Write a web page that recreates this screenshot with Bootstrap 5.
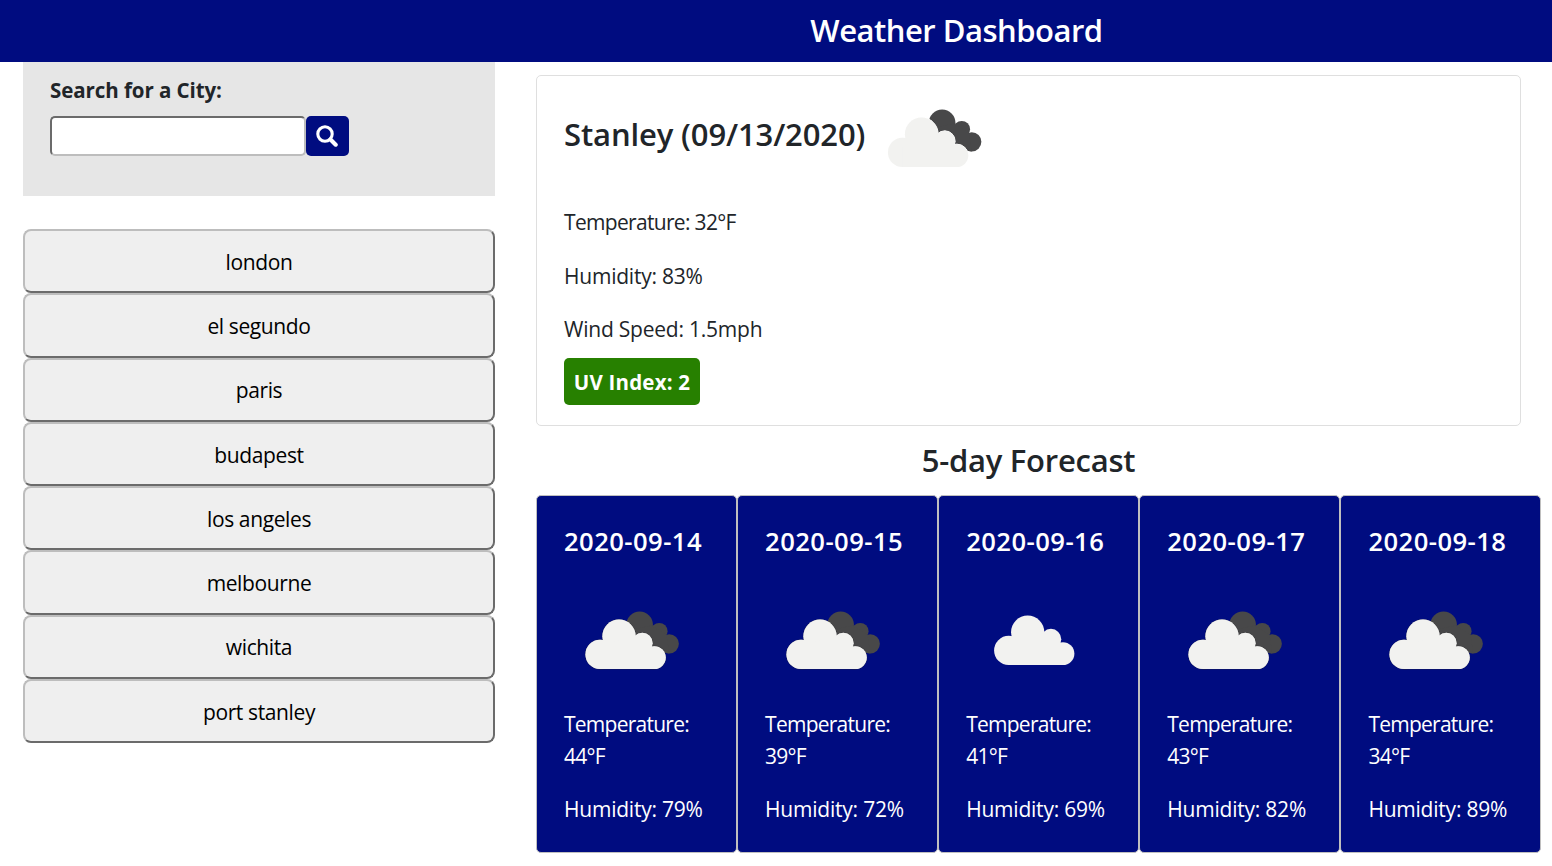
<!DOCTYPE html>
<html lang="en">
<head>
<meta charset="utf-8">
<meta name="viewport" content="width=device-width, initial-scale=1">
<title>Weather Dashboard</title>
<link rel="stylesheet" href="https://cdn.jsdelivr.net/npm/bootstrap@5.3.0/dist/css/bootstrap.min.css">
<style>
  body { font-family: "Open Sans", "Noto Sans", sans-serif; font-size: 21px; line-height: 32px; color: #212529; overflow: hidden; letter-spacing: -.55px; }
  .top-bar { background: #000c80; height: 62px; padding-left: 361px; }
  .top-bar h1 { font-size: 31px; font-weight: 600; letter-spacing: -.5px; }
  .page-body { padding-left: 23px; }
  .side { width: 472px; margin-right: 41px; }
  .search-box { background: #e6e6e6; height: 134px; padding: 12px 27px; margin-bottom: 33px; }
  .search-box label { font-size: 20.5px; font-weight: 700; letter-spacing: -.07px; margin-bottom: 10px; }
  .search-input { width: 256px; height: 40px; border: 2px solid; border-color: #6b6b6b #bdbdbd #bdbdbd #6b6b6b; border-radius: 5px; background: #fff; }
  .search-btn { width: 43px; height: 40px; border: 0; border-radius: 5px; background: #000c80; padding: 0 2px 0 0; }
  .city { height: 64.3px; border: 2px solid; border-color: #bdbdbd #6b6b6b #6b6b6b #bdbdbd; border-radius: 8px; background: #efefef; color: #000; padding: 1px 0 0; letter-spacing: -.38px; }
  .main-col { width: 1005.5px; padding-top: 13px; }
  .today { width: 985px; height: 351px; border-color: #dfdfdf; border-radius: 5px; }
  .today .card-body, .day .card-body { padding: 26.5px 27px; }
  .today-head { height: 66px; margin-bottom: 37px; }
  .today-head h2 { font-size: 31px; font-weight: 600; letter-spacing: -.13px; margin: -2px 2px 0 0; }
  .wx { width: 133px; height: 133px; display: block; flex: none; }
  .today-head .wx { margin: -30px 0 -36px; }
  .line { margin-bottom: 21.4px; white-space: nowrap; }
  .temp { letter-spacing: -.68px; }
  .hum, .wind { letter-spacing: -.22px; }
  .today .temp { margin-bottom: 22.4px; }
  .uv { background: #278000; color: #fff; font-size: 20.5px; font-weight: 700; width: 136px; height: 47px; border-radius: 5px; margin-top: -9px; letter-spacing: .2px; padding-top: 1px; }
  .forecast-title { width: 985px; font-size: 31px; font-weight: 600; letter-spacing: -.25px; line-height: 38px; margin: 15px 0 16px; }
  .day { background: #000c80; color: #fff; border: 1px solid #bfbfbf; border-radius: 5px; height: 358px; width: 201.1px; }
  .day h3 { font-size: 25.6px; font-weight: 600; line-height: 38px; margin: 0 0 13px; white-space: nowrap; letter-spacing: .45px; }
  .day .wx { margin-bottom: 1.5px; }
  .day .temp { letter-spacing: -.75px; }
</style>
</head>
<body>
<svg width="0" height="0" class="position-absolute">
  <defs>
    <g id="cloud-front">
      <circle cx="90" cy="177" r="44"/>
      <circle cx="147" cy="122" r="50"/>
      <circle cx="217" cy="143" r="31"/>
      <circle cx="253" cy="186.500" r="34.500"/>
      <path d="M90 221H253V160L190 125L90 150Z"/>
    </g>
    <g id="cloud-back" fill="#484849">
      <circle cx="209" cy="88" r="40"/>
      <circle cx="268" cy="107" r="25"/>
      <circle cx="298" cy="145" r="29"/>
      <path d="M200 100L245 90L290 120L298 174L250 165L196 125Z"/>
    </g>
    <symbol id="broken" viewBox="0 0 400 400">
      <g transform="translate(18.500 65)">
        <use href="#cloud-back"/>
        <use href="#cloud-front" fill="#f2f2f0" stroke="#2b2b30" stroke-opacity=".3" stroke-width="4"/>
        <use href="#cloud-front" fill="#f2f2f0"/>
      </g>
    </symbol>
    <symbol id="broken-light" viewBox="0 0 400 400">
      <g transform="translate(17 65)">
        <use href="#cloud-back"/>
        <use href="#cloud-front" fill="#f2f2f0" stroke="#fff" stroke-width="3"/>
        <use href="#cloud-front" fill="#f2f2f0"/>
      </g>
    </symbol>
    <symbol id="scattered" viewBox="0 0 400 400">
      <use href="#cloud-front" fill="#f2f2f0" transform="translate(38.500 53)"/>
    </symbol>
  </defs>
</svg>

<header class="top-bar d-flex align-items-center justify-content-center text-white">
  <h1 class="m-0">Weather Dashboard</h1>
</header>

<div class="page-body d-flex">
  <aside class="side flex-shrink-0">
    <div class="search-box">
      <label for="city" class="d-block">Search for a City:</label>
      <div class="d-flex">
        <input id="city" class="search-input" type="text">
        <button class="search-btn d-flex align-items-center justify-content-center" aria-label="Search">
          <svg width="22" height="22" viewBox="0 0 22 22" fill="none" stroke="#fff"><circle cx="9" cy="9" r="7.2" stroke-width="3.1"/><path d="M14.5 14.5L19.7 19.7" stroke-width="4.1" stroke-linecap="round"/></svg>
        </button>
      </div>
    </div>
    <div class="d-flex flex-column">
      <button class="city">london</button>
      <button class="city">el segundo</button>
      <button class="city">paris</button>
      <button class="city">budapest</button>
      <button class="city">los angeles</button>
      <button class="city">melbourne</button>
      <button class="city">wichita</button>
      <button class="city">port stanley</button>
    </div>
  </aside>

  <main class="main-col flex-shrink-0">
    <section class="card today">
      <div class="card-body">
        <div class="today-head d-flex align-items-center">
          <h2>Stanley (09/13/2020)</h2>
          <svg class="wx"><use href="#broken-light"/></svg>
        </div>
        <p class="line temp">Temperature: 32°F</p>
        <p class="line hum">Humidity: 83%</p>
        <p class="line wind">Wind Speed: 1.5mph</p>
        <div class="uv d-flex align-items-center justify-content-center">UV Index: 2</div>
      </div>
    </section>

    <h2 class="forecast-title text-center">5-day Forecast</h2>

    <section class="d-flex">
      <div class="card day"><div class="card-body">
        <h3>2020-09-14</h3><svg class="wx"><use href="#broken"/></svg>
        <p class="line temp">Temperature:<br>44°F</p><p class="line hum">Humidity: 79%</p>
      </div></div>
      <div class="card day"><div class="card-body">
        <h3>2020-09-15</h3><svg class="wx"><use href="#broken"/></svg>
        <p class="line temp">Temperature:<br>39°F</p><p class="line hum">Humidity: 72%</p>
      </div></div>
      <div class="card day"><div class="card-body">
        <h3>2020-09-16</h3><svg class="wx"><use href="#scattered"/></svg>
        <p class="line temp">Temperature:<br>41°F</p><p class="line hum">Humidity: 69%</p>
      </div></div>
      <div class="card day"><div class="card-body">
        <h3>2020-09-17</h3><svg class="wx"><use href="#broken"/></svg>
        <p class="line temp">Temperature:<br>43°F</p><p class="line hum">Humidity: 82%</p>
      </div></div>
      <div class="card day"><div class="card-body">
        <h3>2020-09-18</h3><svg class="wx"><use href="#broken"/></svg>
        <p class="line temp">Temperature:<br>34°F</p><p class="line hum">Humidity: 89%</p>
      </div></div>
    </section>
  </main>
</div>
<script src="https://cdn.jsdelivr.net/npm/bootstrap@5.3.0/dist/js/bootstrap.bundle.min.js"></script>
</body>
</html>
